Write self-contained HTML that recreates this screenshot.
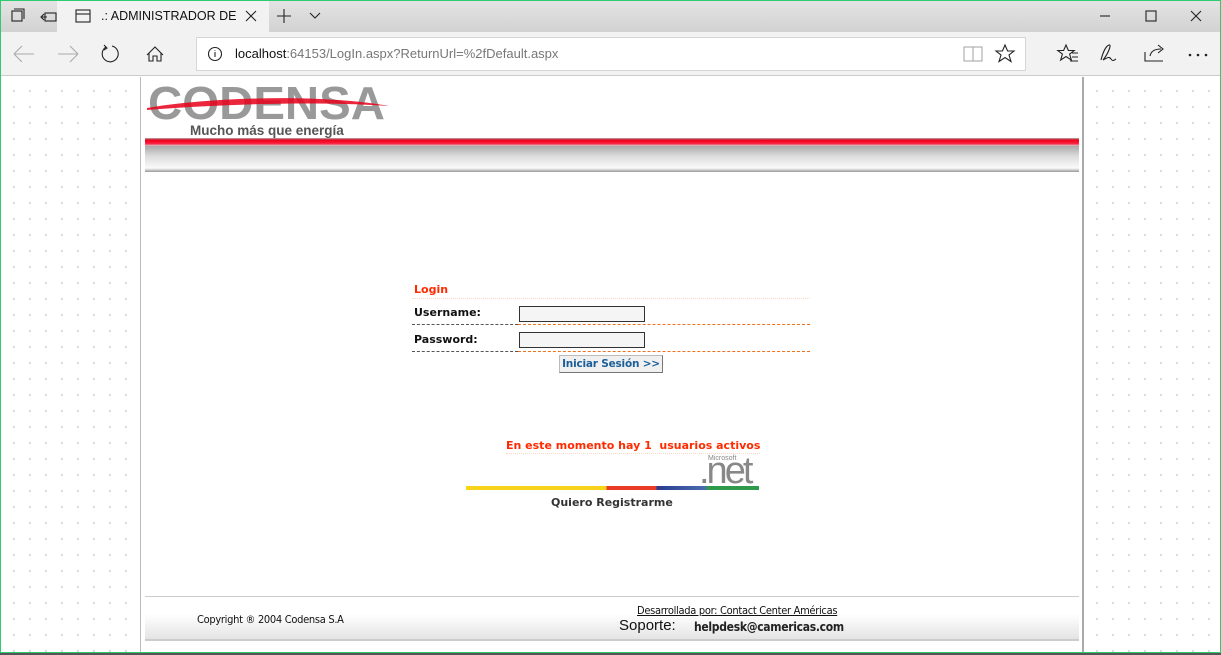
<!DOCTYPE html>
<html><head><meta charset="utf-8"><style>
*{margin:0;padding:0;box-sizing:border-box}
body{width:1221px;height:655px;overflow:hidden;position:relative;font-family:"Liberation Sans",sans-serif;background:#fff}
.abs{position:absolute}
.dots{background-color:#fff;background-image:radial-gradient(#b8b8b8 0.7px,transparent 0.9px);background-size:16px 16px;background-position:6px 6px}
.v{font-family:Verdana,"DejaVu Sans",sans-serif;font-weight:bold;font-size:11px;white-space:nowrap}
</style></head><body>
<div class="abs" style="left:0;top:0;width:1221px;height:32px;background:linear-gradient(#e4e4e4,#d2d2d2)"></div>
<div class="abs" style="left:57px;top:0;width:212px;height:32px;background:#f2f2f2"></div>
<div class="abs" style="left:0;top:32px;width:1221px;height:44px;background:#f2f2f2;border-bottom:1px solid #ccc"></div>
<svg class="abs" style="left:0;top:0" width="1221" height="80" fill="none" stroke="#222" stroke-width="1.1">
<rect x="12" y="11" width="10" height="10"/><path d="M14 9h10v10"/>
<rect x="45" y="13" width="11" height="8"/><path d="M41 17h6M44 14l-3 3 3 3"/>
<rect x="76" y="10" width="14" height="12"/><path d="M76 14h14"/>
<path d="M246 11l10 10M256 11l-10 10"/>
<path d="M284 9v14M277 16h14"/>
<path d="M310 13l5 5 5-5"/>
<path d="M1100 16h10"/><rect x="1146" y="11" width="10" height="10"/><path d="M1191 11l10 10M1201 11l-10 10"/>
<g stroke="#aaa"><path d="M14 54h20M14 54l8-8M14 54l8 8"/><path d="M58 54h20M78 54l-8-8M78 54l-8 8"/></g>
<path d="M106 47a8 8 0 1 0 6 -1"/><path d="M104 45l3 3-3 2"/>
<path d="M147 55l8-8 8 8M149 53v8h4v-5h4v5h4v-8"/>
<path d="M1066 45l2.4 5.5h5.8l-4.6 3.6 1.8 6-5.4-3.6-5.4 3.6 1.8-6-4.6-3.6h5.8zM1072 53h6M1072 57h6M1070 61h8"/>
<path d="M1101 60c2-8 5-14 8-15s-1 9-6 15M1103 60c4-2 6-4 8-1s3 1 5 0"/>
<path d="M1145 52v9h18M1150 56c1-5 5-7 11-7M1158 45l5 4-5 4"/>
<g fill="#222" stroke="none"><circle cx="1190" cy="55" r="1.3"/><circle cx="1198" cy="55" r="1.3"/><circle cx="1206" cy="55" r="1.3"/></g>
</svg>
<div class="abs" style="left:101px;top:9px;font-size:12.5px;color:#111">.: ADMINISTRADOR DE</div>
<div class="abs" style="left:196px;top:37px;width:830px;height:34px;background:#fff;border:1px solid #d6d6d6"></div>
<svg class="abs" style="left:196px;top:37px" width="830" height="34" fill="none" stroke="#222" stroke-width="1.1">
<circle cx="19" cy="17" r="6.5"/><path d="M19 15v5M19 13v0.6"/>
<g stroke="#aaa"><rect x="768" y="10" width="18" height="14"/><path d="M777 10v14"/></g>
<path d="M809 8l2.6 6h6.4l-5 4 2 6.5-6-4-6 4 2-6.5-5-4h6.4z"/>
</svg>
<div class="abs" style="left:235px;top:46px;font-size:13px;color:#111">localhost<span style="color:#777">:64153/LogIn.aspx?ReturnUrl=%2fDefault.aspx</span></div>
<div class="abs dots" style="left:0;top:77px;width:141px;height:575px"></div>
<div class="abs dots" style="left:1083px;top:77px;width:138px;height:575px"></div>
<div class="abs" style="left:140px;top:77px;width:944px;height:575px;background:#fff;border-left:1px solid #bbb;border-right:2px solid #aaa"></div>
<svg class="abs" style="left:145px;top:79px" width="250" height="60">
<text x="3" y="40" font-family="Liberation Sans" font-weight="bold" font-size="46" fill="#999" textLength="237" lengthAdjust="spacingAndGlyphs">CODENSA</text>
<path d="M2 29 C60 19 170 14 244 27 C170 22 80 25 2 31z" fill="#e8001a" opacity="0.85"/>
<text x="45" y="56" font-family="Liberation Sans" font-weight="bold" font-size="13.5" fill="#555">Mucho más que energía</text>
</svg>
<div class="abs" style="left:145px;top:138px;width:934px;height:8px;background:linear-gradient(#b0b0b0 0,#e8001a 25%,#ff2040 70%,#d0d0d0)"></div>
<div class="abs" style="left:145px;top:146px;width:934px;height:26px;background:linear-gradient(#aaa,#ddd 40%,#fafafa 85%,#999)"></div>
<div class="abs v" style="left:414px;top:283px;color:#ff2a00">Login</div>
<div class="abs" style="left:412px;top:298px;width:398px;border-top:1px dotted #fcd9c5"></div>
<div class="abs v" style="left:414px;top:306px;color:#111">Username:</div>
<div class="abs" style="left:519px;top:306px;width:126px;height:16px;border:1px solid #333;background:#f5f5f5"></div>
<div class="abs" style="left:412px;top:324px;width:106px;border-top:1px dashed #555"></div>
<div class="abs" style="left:518px;top:324px;width:292px;border-top:1px dashed #f07020"></div>
<div class="abs v" style="left:414px;top:333px;color:#111">Password:</div>
<div class="abs" style="left:519px;top:332px;width:126px;height:16px;border:1px solid #333;background:#f5f5f5"></div>
<div class="abs" style="left:412px;top:351px;width:106px;border-top:1px dashed #555"></div>
<div class="abs" style="left:518px;top:351px;width:292px;border-top:1px dashed #f07020"></div>
<div class="abs v" style="left:559px;top:355px;width:104px;height:18px;background:#f0f0f0;border:1px solid #bbb;border-right-color:#777;border-bottom-color:#777;color:#1a5f9a;text-align:center;line-height:16px;font-size:10.5px;letter-spacing:-0.2px">Iniciar Sesión &gt;&gt;</div>
<div class="abs v" style="left:506px;top:439px;color:#ff2a00;font-size:11px">En este momento hay 1&nbsp; usuarios activos</div>
<div class="abs" style="left:506px;top:453px;width:254px;border-top:1px dotted #fcd9c5"></div>
<div class="abs" style="left:708px;top:455px;font-size:7px;color:#888">Microsoft</div>
<div class="abs" style="left:699px;top:450px;font-size:38px;color:#888;letter-spacing:-3px;font-family:'Liberation Sans'">.net</div>
<div class="abs" style="left:466px;top:486px;width:293px;height:4px;background:linear-gradient(90deg,#f7d31c 0,#f7d31c 48%,#e83a24 48%,#e83a24 65%,#2a3b8f 65%,#4a6fb0 82%,#2e9a4a 82%)"></div>
<div class="abs v" style="left:551px;top:496px;color:#333">Quiero Registrarme</div>
<div class="abs" style="left:145px;top:596px;width:934px;height:45px;border-top:1px solid #ccc;border-bottom:2px solid #ccc;background:linear-gradient(#fff 40%,#e4e4e4)"></div>
<div class="abs" style="left:197px;top:613px;font-size:11px;color:#111;font-family:'DejaVu Sans Condensed',sans-serif;letter-spacing:-0.3px">Copyright ® 2004 Codensa S.A</div>
<div class="abs" style="left:637px;top:604px;font-size:11px;color:#111;text-decoration:underline;font-family:'DejaVu Sans Condensed',sans-serif;letter-spacing:-0.3px">Desarrollada por: Contact Center Américas</div>
<div class="abs" style="left:619px;top:617px;font-size:15px;color:#111">Soporte:</div>
<div class="abs" style="left:694px;top:620px;font-size:12px;font-weight:bold;color:#222;font-family:'DejaVu Sans Condensed',sans-serif;letter-spacing:-0.3px">helpdesk@camericas.com</div>
<div class="abs" style="left:0;top:652px;width:1221px;height:3px;background:#555"></div>
<div class="abs" style="left:0;top:0;width:1221px;height:653px;border:1px solid #2ecc71;pointer-events:none"></div>
</body></html>
